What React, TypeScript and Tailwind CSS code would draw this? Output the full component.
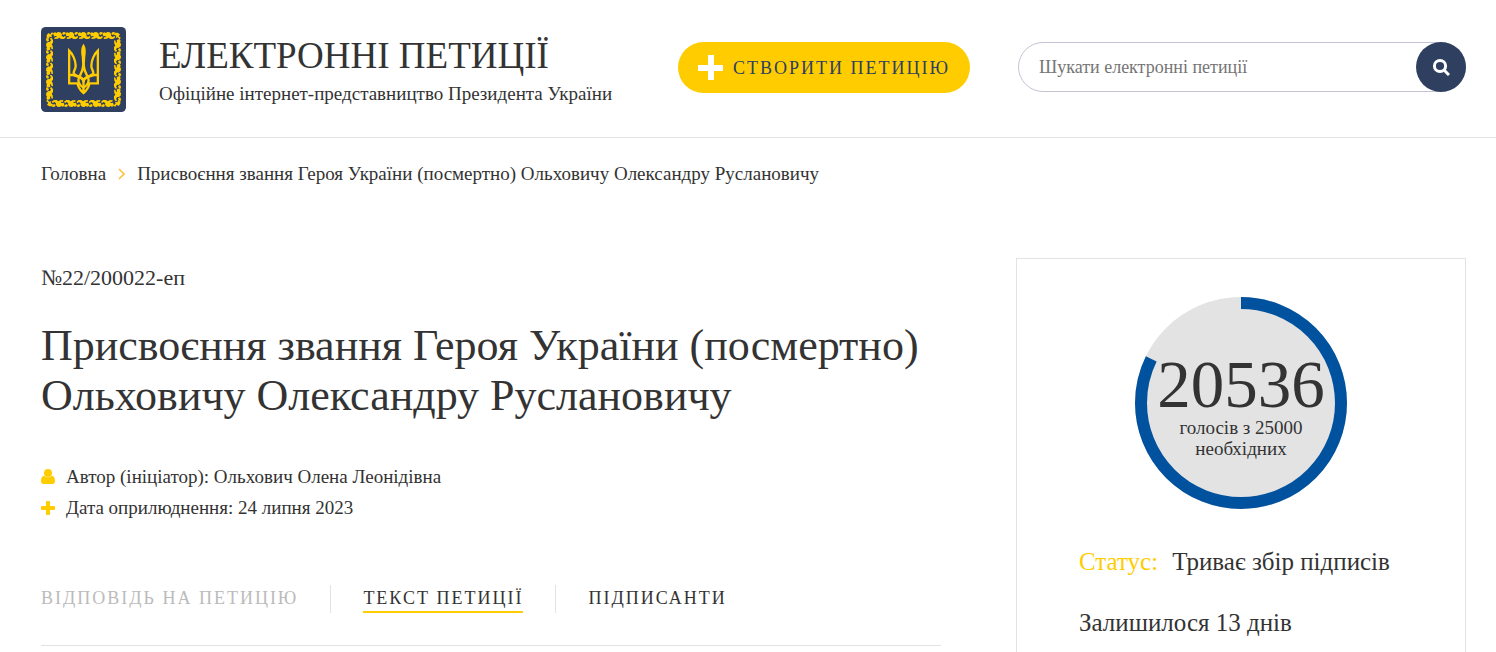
const SIGNED = 20536;
const REQUIRED = 25000;

const tabs = [
  { label: 'Відповідь на петицію', state: 'disabled' },
  { label: 'Текст петиції', state: 'active' },
  { label: 'Підписанти', state: 'idle' },
];

// One leaf pair of the garland, 36 units wide
function Leaf() {
  return (
    <g>
      <path d="M-1 5 L5 2 L10 4 L13 1 L21 2 L26 8 L25 12 L30 16 L36 12 L37 18 L31 22 L23 22 L18 18 L13 21 L3 22 L4 17 L11 16 L8 13 L2 14 Z" />
      <path d="M26 4 L31 1 L37 2 L35 8 L29 10 Z" />
    </g>
  );
}

function Emblem() {
  const steps = [0, 1, 2, 3, 4];
  return (
    <svg viewBox="0 0 255 255" className="size-[85px] shrink-0" aria-hidden="true">
      <rect width="255" height="255" rx="14" fill="#2e3f60" />
      <g fill="#ffcc00">
        {[0, 90, 180, 270].map(angle => (
          <g key={angle} transform={`rotate(${angle} 127.5 127.5)`}>
            {steps.map(i => (
              <g key={i} transform={`translate(${37 + i * 37} 14)`}>
                <Leaf />
              </g>
            ))}
            <path d="M17 25 L22 18 L28 22 L33 15 L37 20 L31 25 L33 31 L26 29 L23 36 L17 34 Z" />
          </g>
        ))}
      </g>
      <g fill="none" stroke="#ffcc00" strokeWidth="7">
        <path d="M84.5 72 V169 H111 M144 169 H170.5 V72" />
        <path d="M84.5 72 C97 84 103 96 104 116 C104 126 99 130 98 137 C98 144 109 145 114 150" />
        <path d="M170.5 72 C158 84 152 96 151 116 C151 126 156 130 157 137 C157 144 146 145 141 150" />
        <path d="M127.5 112 C126 130 120 141 115 150 C109 160 113 174 127.5 182 C142 174 146 160 140 150 C135 141 129 130 127.5 112 Z" />
        <path d="M84 144 H96 C114 148 127.5 152 127.5 165 C127.5 152 141 148 159 144 H171" />
        <path d="M109 168 C113 184 118 191 127.5 198 C137 191 142 184 146 168 M127.5 160 V198" />
      </g>
      <path fill="#ffcc00" d="M81 62 L97 80 L81 80 Z M174 62 L158 80 L174 80 Z" />
      <path fill="#ffcc00" d="M127.5 50 C119 61 120 76 122 88 L124 122 H131 L133 88 C135 76 136 61 127.5 50 Z" />
    </svg>
  );
}

function SearchIcon() {
  return (
    <svg viewBox="0 0 18 18" className="size-[18px]" fill="none" stroke="white" strokeWidth="3" aria-hidden="true">
      <circle cx="8" cy="8" r="5.6" />
      <path d="M12 12 L17 17" />
    </svg>
  );
}

function UserIcon() {
  return (
    <svg viewBox="0 0 14 16" className="h-4 w-[14px]" fill="#ffcc00" aria-hidden="true">
      <circle cx="7" cy="4" r="4" />
      <path d="M3.4 6.8 C1 7 0 9 0 12 C0 13.700 1 15 2.500 15 H11.500 C13 15 14 13.700 14 12 C14 9 13 7 10.600 6.800 C8.500 8.900 5.500 8.900 3.400 6.800 Z" />
    </svg>
  );
}

function PlusIcon() {
  return (
    <svg viewBox="0 0 14 14" className="size-[14px]" fill="#ffcc00" aria-hidden="true">
      <path d="M6 0h2q1 0 1 1v4h4q1 0 1 1v2q0 1-1 1h-4v4q0 1-1 1h-2q-1 0-1-1v-4h-4q-1 0-1-1v-2q0-1 1-1h4v-4q0-1 1-1z" />
    </svg>
  );
}

function Header() {
  return (
    <header className="flex items-start border-b border-[#e3e3e3] pt-[27px] pr-[30px] pb-[25px] pl-[41px]">
      <a href="#" className="flex flex-1 items-start gap-[33px]">
        <Emblem />
        <span className="pt-[7px] whitespace-nowrap">
          <span className="block text-[37px] leading-[44px] uppercase">Електронні петиції</span>
          <span className="block text-[19px] leading-8">Офіційне інтернет-представництво Президента України</span>
        </span>
      </a>
      <button className="mt-[15px] mr-12 flex h-[51px] w-[292px] items-center gap-[10px] rounded-full bg-[#ffcc00] pl-5 text-lg tracking-[2px] whitespace-nowrap text-[#2e3f60] uppercase">
        <svg viewBox="0 0 25 25" className="size-[25px] shrink-0" fill="white" aria-hidden="true">
          <path d="M10 0h6v10h9v6h-9v9h-6v-9H0v-6h10z" />
        </svg>
        Створити петицію
      </button>
      <form className="mt-[15px] flex h-[50px] w-[448px] rounded-full border border-[#c6c2d6]">
        <input
          type="text"
          aria-label="Шукати електронні петиції"
          placeholder="Шукати електронні петиції"
          className="min-w-0 flex-1 rounded-full pl-5 text-lg outline-none placeholder:text-[#757575]"
        />
        <button type="button" aria-label="Шукати" className="-m-px flex size-[50px] items-center justify-center rounded-full bg-[#2e3f60]">
          <SearchIcon />
        </button>
      </form>
    </header>
  );
}

function VoteCounter() {
  const length = 2 * Math.PI * 100;
  return (
    <div className="relative mx-auto size-[212px]">
      <svg viewBox="0 0 212 212" className="size-full" aria-hidden="true">
        <circle cx="106" cy="106" r="106" fill="#e3e3e3" />
        <circle
          cx="106"
          cy="106"
          r="100"
          fill="none"
          stroke="#00519e"
          strokeWidth="12"
          strokeDasharray={`${(length * SIGNED) / REQUIRED} ${length}`}
          transform="rotate(-90 106 106)"
        />
      </svg>
      <div className="absolute inset-0 pt-[54px] text-center">
        <div className="text-[67px] leading-[66px]">{SIGNED}</div>
        <p className="px-8 text-[19px] leading-[21px]">{`голосів з ${REQUIRED} необхідних`}</p>
      </div>
    </div>
  );
}

export default function App() {
  return (
    <div className="bg-white font-[Georgia,'Liberation_Serif',serif] text-[#333333]">
      <Header />
      <nav className="flex items-center gap-3 pt-6 pr-[30px] pl-[41px] text-[19px] leading-6">
        <a href="#">Головна</a>
        <svg viewBox="0 0 7 12" className="h-3 w-[7px]" fill="none" stroke="#ffbf3f" strokeWidth="1.6" aria-hidden="true">
          <path d="M1 1 L6 6 L1 11" />
        </svg>
        <span>Присвоєння звання Героя України (посмертно) Ольховичу Олександру Руслановичу</span>
      </nav>
      <div className="flex gap-[75px] pt-[72px] pr-[30px] pl-[41px]">
        <main className="min-w-0 flex-1">
          <p className="pt-2 text-[22px] leading-6">№22/200022-еп</p>
          <h1 className="pt-[31px] text-[44px] leading-[50px]">
            Присвоєння звання Героя України (посмертно) Ольховичу Олександру Руслановичу
          </h1>
          <ul className="pt-[40px] text-[19px] leading-[31px]">
            <li className="flex items-center gap-[11px]">
              <UserIcon />
              Автор (ініціатор): Ольхович Олена Леонідівна
            </li>
            <li className="flex items-center gap-[11px]">
              <PlusIcon />
              Дата оприлюднення: 24 липня 2023
            </li>
          </ul>
          <div className="mt-[62px] flex border-b border-[#e3e3e3] pb-8 text-lg leading-[26px] tracking-[2px] whitespace-nowrap uppercase">
            {tabs.map(tab => (
              <div key={tab.label} className="border-l border-[#e3e3e3] px-8 first:border-0 first:pl-0">
                <button
                  disabled={tab.state === 'disabled'}
                  className={`block border-b-2 uppercase ${
                    tab.state === 'active'
                      ? 'border-[#ffcc00]'
                      : tab.state === 'disabled'
                        ? 'border-transparent text-[#bbbbbb]'
                        : 'border-transparent'
                  }`}
                >
                  {tab.label}
                </button>
              </div>
            ))}
          </div>
        </main>
        <aside className="w-[450px] shrink-0 border border-b-0 border-[#e3e3e3] pt-[38px]">
          <VoteCounter />
          <p className="px-[62px] pt-[38px] text-[25px] leading-[30px]">
            <span className="mr-[14px] text-[#ffcc00]">Статус:</span>
            Триває збір підписів
          </p>
          <p className="px-[62px] pt-[31px] pb-[14px] text-[25px] leading-[30px]">Залишилося 13 днів</p>
        </aside>
      </div>
    </div>
  );
}
